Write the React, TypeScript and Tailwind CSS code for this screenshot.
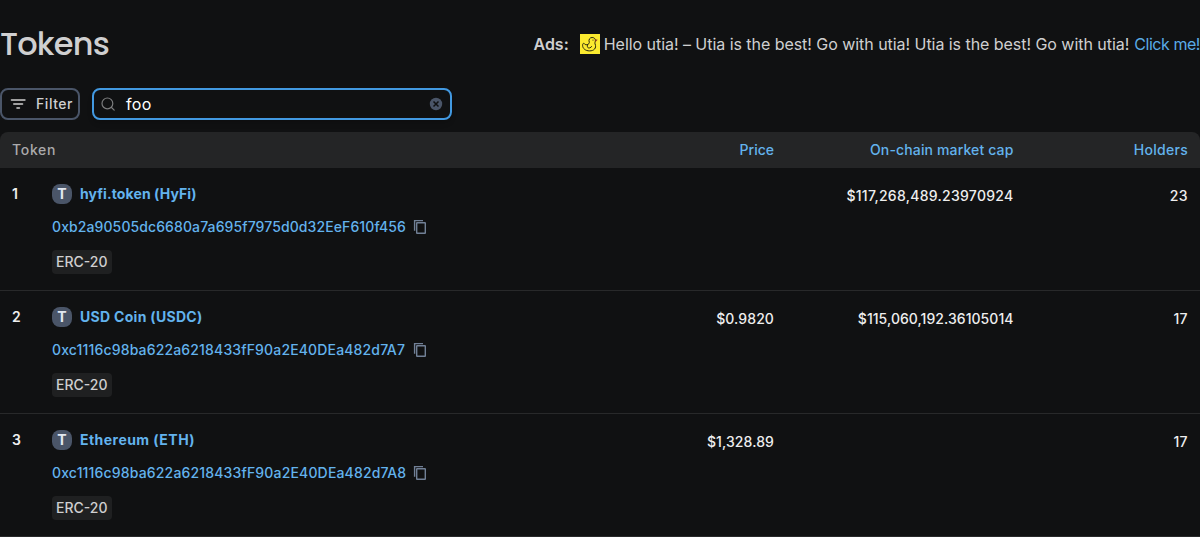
type Token = {
  name: string;
  nameTracking: string;
  address: string;
  addressTracking: string;
  price?: string;
  cap?: string;
  capTracking?: string;
  holders: string;
};

const tokens: Token[] = [
  {
    name: "hyfi.token (HyFi)",
    nameTracking: "tracking-[0.1px]",
    address: "0xb2a90505dc6680a7a695f7975d0d32EeF610f456",
    addressTracking: "tracking-[0.1px]",
    cap: "$117,268,489.23970924",
    capTracking: "tracking-[0.28px]",
    holders: "23",
  },
  {
    name: "USD Coin (USDC)",
    nameTracking: "tracking-[0.3px]",
    address: "0xc1116c98ba622a6218433fF90a2E40DEa482d7A7",
    addressTracking: "tracking-[0.155px]",
    price: "$0.9820",
    cap: "$115,060,192.36105014",
    capTracking: "tracking-[0.05px]",
    holders: "17",
  },
  {
    name: "Ethereum (ETH)",
    nameTracking: "tracking-[0.46px]",
    address: "0xc1116c98ba622a6218433fF90a2E40DEa482d7A8",
    addressTracking: "tracking-[0.165px]",
    price: "$1,328.89",
    holders: "17",
  },
];

const columns = "grid grid-cols-[546px_240px_239px_175px]";

function Duck() {
  return (
    <svg viewBox="0 0 20 20" className="mr-1 ml-[11px] size-5 shrink-0" fill="none">
      <rect width="20" height="20" fill="#fbea2f" />
      <path
        d="M9.300 8.600C8.300 5.500 9.800 3.500 12.100 3.500c2.200 0 3.500 1.500 3.300 3.300-.1 1.300-.9 2-.3 3.200 1.700 4.200-1.200 6.900-5.500 6.900-4.100 0-7-2.400-7-5.600 0-1.900 1.200-2.500 1.800-1.500.9 1.100 2.300 1.300 3.600.6.700-.4 1.200-1 1.300-1.800Z"
        stroke="#24230f"
        strokeWidth="1"
      />
      <path d="M7.500 11.200c-.5 2.100.5 3 2 2.700 1.100-.2 1.900-.7 2.200-1.700" stroke="#24230f" strokeWidth="1" />
      <path d="M15 5.300l2.700.5-2.300 2.200z" fill="#8f3a20" />
      <circle cx="13" cy="6" r=".6" fill="#24230f" />
    </svg>
  );
}

function CopyIcon() {
  return (
    <svg viewBox="0 0 20 20" className="ml-1 size-5" fill="none" stroke="#718096" strokeWidth="1.400">
      <path d="M2.700 0V0M4.600 13.800V3.600H13" />
      <rect x="6.700" y="5.700" width="8.600" height="10.600" rx=".4" />
    </svg>
  );
}

function Row({ token, index }: { token: Token; index: number }) {
  return (
    <div className={`${columns} h-[123px] border-b border-[#28292a] text-sm leading-5 font-medium`}>
      <div className="flex pt-4 pl-3">
        <span className="w-10 font-semibold text-[#eeeeee]">{index}</span>
        <div className="flex flex-col items-start">
          <div className="flex h-5 items-center font-bold text-[#63b3ed]">
            <span className="mr-2 flex size-5 items-center justify-center rounded-lg bg-[#4a5568] text-sm leading-5 font-bold text-[#e2e8f0]">
              T
            </span>
            <span className={token.nameTracking}>{token.name}</span>
          </div>
          <div className="mt-[13px] flex h-5 items-center text-[#63b3ed]">
            <span className={`w-[354px] whitespace-nowrap ${token.addressTracking}`}>{token.address}</span>
            <CopyIcon />
          </div>
          <span className="mt-[13px] flex h-6 items-center rounded-sm bg-[#1f2021] px-1 text-[#cfcfd0]">ERC-20</span>
        </div>
      </div>
      <div className="pt-[18px] pr-3 text-right tracking-[0.1px] text-[#eeeeee]">{token.price}</div>
      <div className={`pt-[18px] pr-[11.500px] text-right text-[#eeeeee] ${token.capTracking ?? ""}`}>{token.cap}</div>
      <div className="pt-[18px] pr-3 text-right tracking-[0.4px] text-[#eeeeee]">{token.holders}</div>
    </div>
  );
}

export default function App() {
  return (
    <div className="h-[537px] w-[1200px] overflow-hidden bg-[#101112] font-['Inter',sans-serif] text-[#cfcfd0]">
      <div className="flex h-[88px] items-center justify-between">
        <h1 className="font-['Poppins','Inter',sans-serif] text-[32px] leading-10 font-medium tracking-[-0.8px]">
          Tokens
        </h1>
        <div className="flex h-6 items-center text-base whitespace-nowrap">
          <span className="font-semibold">Ads:</span>
          <Duck />
          <span className="tracking-[-0.045px]">
            Hello utia! – Utia is the best! Go with utia! Utia is the best! Go with utia!
          </span>
          <a className="ml-[5px] tracking-[-0.45px] text-[#5aaae6]">Click me!</a>
        </div>
      </div>

      <div className="flex h-8 gap-3">
        <button className="flex w-20 items-center rounded-lg border-2 border-[#4a5568] pl-1.5 text-sm font-medium tracking-[0.55px]">
          <svg viewBox="0 0 20 20" className="mr-2 size-5" fill="currentColor">
            <rect x="2.700" y="5.200" width="15" height="1.600" rx=".8" />
            <rect x="5" y="9.200" width="10.300" height="1.600" rx=".8" />
            <rect x="8.200" y="13.200" width="4" height="1.600" rx=".8" />
          </svg>
          Filter
        </button>
        <div className="flex w-[360px] items-center rounded-lg border-2 border-[#4299e1] pr-1.5 pl-1.5 shadow-md">
          <svg viewBox="0 0 16 16" className="size-4" fill="none" stroke="#7b7c7d" strokeWidth="1.200" strokeLinecap="round">
            <circle cx="7.400" cy="7.400" r="5.400" />
            <path d="m11.500 11.500 2.700 2.700" />
          </svg>
          <span className="ml-2.5 flex-1 text-base tracking-[0.4px] text-white">foo</span>
          <svg viewBox="0 0 16 16" className="size-4">
            <circle cx="8" cy="8" r="6.200" fill="#4a5568" />
            <path d="m5.500 5.500 5 5m0-5-5 5" stroke="#101112" strokeWidth="1.500" />
          </svg>
        </div>
      </div>

      <div
        className={`${columns} mt-3 h-9 items-center rounded-t-lg bg-[#242526] text-sm font-medium text-[#63b3ed]`}
      >
        <span className="pl-3 tracking-[0.7px] text-[#aaaaab]">Token</span>
        <span className="pr-3 text-right">Price</span>
        <span className="pr-[11.500px] text-right tracking-[0.14px]">On-chain market cap</span>
        <span className="pr-3 text-right tracking-[0.28px]">Holders</span>
      </div>
      {tokens.map((token, i) => (
        <Row key={token.address} token={token} index={i + 1} />
      ))}
    </div>
  );
}
